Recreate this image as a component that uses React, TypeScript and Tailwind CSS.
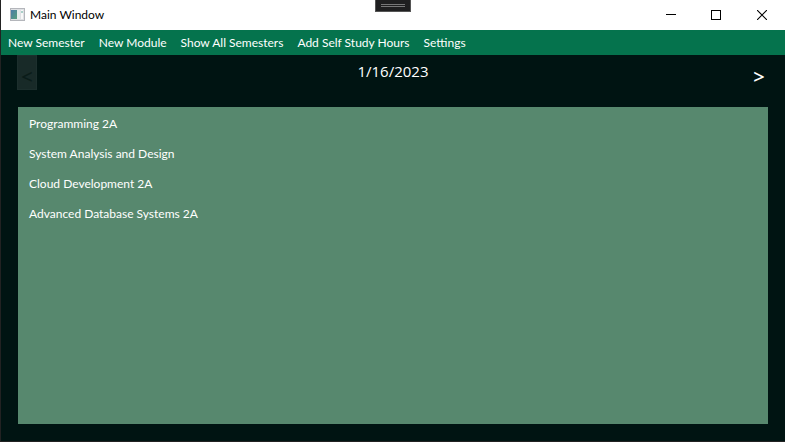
import React from "react";

const menuItems = [
  "New Semester",
  "New Module",
  "Show All Semesters",
  "Add Self Study Hours",
  "Settings",
];

const modules = [
  "Programming 2A",
  "System Analysis and Design",
  "Cloud Development 2A",
  "Advanced Database Systems 2A",
];

function AppIcon() {
  return (
    <svg width="16" height="14" viewBox="0 0 16 14" shapeRendering="crispEdges" aria-hidden="true">
      <defs>
        <linearGradient id="pane" x1="0" y1="0" x2="1" y2="1">
          <stop offset="0" stopColor="#4a7ba8" />
          <stop offset="1" stopColor="#56a07c" />
        </linearGradient>
      </defs>
      <rect x="1" y="0" width="15" height="13" fill="#b4b6bb" />
      <rect x="2" y="1" width="13" height="11" fill="#dfe1e4" />
      <rect x="2" y="2" width="6" height="9" fill="url(#pane)" />
      <rect x="8" y="2" width="3" height="9" fill="#e3eceb" />
      <rect x="12" y="2" width="2" height="9" fill="#f8f8f8" />
      <rect x="12" y="3" width="2" height="2" fill="#a9cfc8" />
    </svg>
  );
}

function TitleBar() {
  return (
    <header className="relative flex h-[30px] items-center bg-white pl-2 text-black">
      <AppIcon />
      <h1 className="ml-[5px] text-xs">Main Window</h1>
      <div className="absolute left-1/2 top-0 flex h-3 w-9 -translate-x-1/2 flex-col items-center gap-px border border-t-0 border-[#555555] bg-[#1f1f20] pt-1">
        <span className="h-px w-6 bg-[#777777]" />
        <span className="h-px w-6 bg-[#777777]" />
      </div>
      <div className="ml-auto flex h-full">
        <button type="button" aria-label="Minimize" className="flex w-[45px] items-center justify-center">
          <svg width="10" height="10" viewBox="0 0 10 10" shapeRendering="crispEdges">
            <path d="M0 4h10v1H0z" fill="#000" />
          </svg>
        </button>
        <button type="button" aria-label="Maximize" className="flex w-[46px] items-center justify-center">
          <svg width="10" height="10" viewBox="0 0 10 10" shapeRendering="crispEdges">
            <rect x="0.5" y="0.5" width="9" height="9" fill="none" stroke="#000" />
          </svg>
        </button>
        <button type="button" aria-label="Close" className="flex w-[46px] items-center justify-center">
          <svg width="10" height="10" viewBox="0 0 10 10">
            <path d="M0 0l10 10M10 0L0 10" stroke="#000" strokeWidth="1.1" />
          </svg>
        </button>
      </div>
    </header>
  );
}

export default function App() {
  return (
    <div className="flex min-h-screen flex-col border-b border-l border-[#222222] bg-[#001412] font-['Lato','Open_Sans',sans-serif] text-white">
      <TitleBar />
      <nav className="flex h-[25px] items-center gap-[14px] bg-[#05734d] pl-[7px]">
        {menuItems.map((item) => (
          <button key={item} type="button" className="whitespace-nowrap text-xs">
            {item}
          </button>
        ))}
      </nav>
      <main className="flex grow flex-col px-4 pb-[17px]">
        <div className="flex h-[52px] items-start justify-between font-['Open_Sans',sans-serif]">
          <button
            type="button"
            disabled
            aria-label="Previous day"
            className="flex h-[35px] w-5 items-end justify-center border border-[#1c2f2d] bg-[#182a28] text-xl leading-6 font-semibold text-[#0a1c19]"
          >
            &lt;
          </button>
          <time dateTime="2023-01-16" className="mt-1 text-[15px] leading-6">
            1/16/2023
          </time>
          <button
            type="button"
            aria-label="Next day"
            className="flex h-[35px] w-5 items-end justify-center border border-transparent text-xl leading-6 font-semibold"
          >
            &gt;
          </button>
        </div>
        <ul className="mx-px grow bg-[#57886e] px-[11px] pt-[2px] text-xs">
          {modules.map((name) => (
            <li key={name} className="flex h-[30px] items-center">
              {name}
            </li>
          ))}
        </ul>
      </main>
    </div>
  );
}
